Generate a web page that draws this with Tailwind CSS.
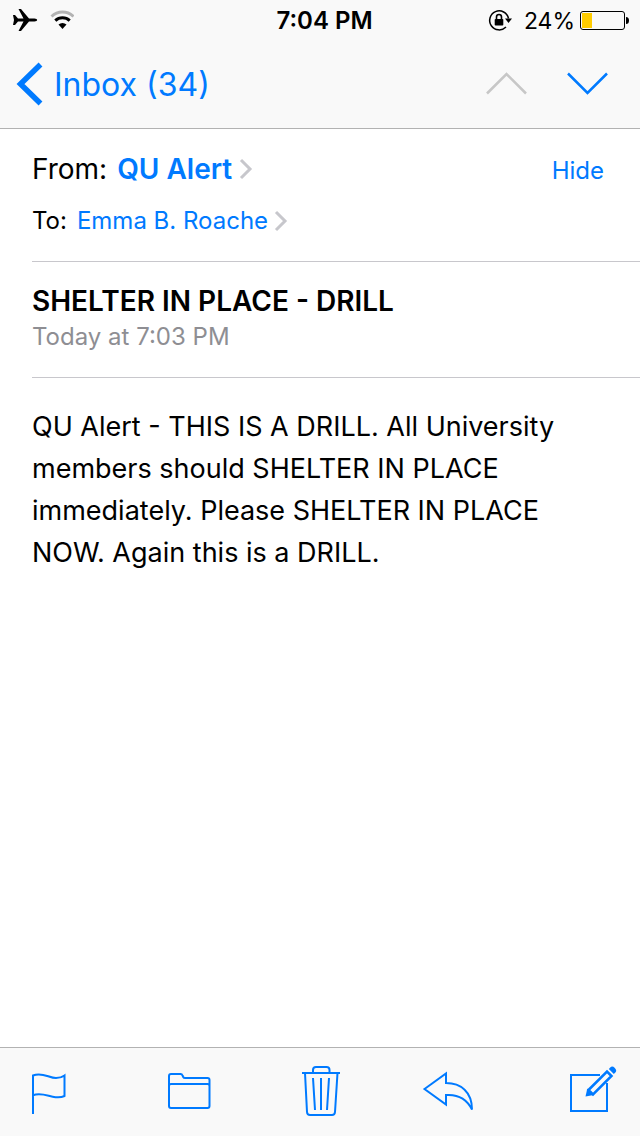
<!DOCTYPE html>
<html lang="en">
<head>
<meta charset="utf-8">
<meta name="viewport" content="width=device-width, initial-scale=1">
<title>Mail</title>
<script src="https://cdn.jsdelivr.net/npm/@tailwindcss/browser@4"></script>
</head>
<body class="flex min-h-screen flex-col bg-white font-['Inter','Liberation_Sans',sans-serif] text-black">
<header class="border-b border-[#b2b2b2] bg-[#f9f9f9]">
  <!-- Status bar -->
  <div class="grid h-10 grid-cols-[1fr_auto_1fr] items-center pt-0.5 pr-[11px] pl-5 text-2xl">
    <div class="-ml-2 flex items-center gap-3">
      <svg class="h-6 w-[26px]" viewBox="12 9 26 24" role="img" aria-label="Airplane mode"><path d="M13 15h2l3 3.400h5.500L18.500 9H21l8 9.400h5.500q2.700.2 2.700 1.600t-2.700 1.600H29L21 31h-2.500l5-9.400H18L15 25h-2l1-5z"/></svg>
      <svg class="h-6 w-6" viewBox="50 9 24 24" fill="none" role="img" aria-label="Wi-Fi"><path d="M51.500 16.500a16 16 0 0 1 22 0" stroke="#b3b3b3" stroke-width="3"/><path d="M55.300 20.700a10.500 10.500 0 0 1 14.400 0" stroke="#000" stroke-width="3"/><path d="M58.500 24.600a6 6 0 0 1 8 0l-4 4.400z" fill="#000"/></svg>
    </div>
    <div class="font-semibold">7:04 PM</div>
    <div class="flex items-center justify-end">
      <svg class="mr-3 h-6 w-[26px]" viewBox="486 9 26 24" fill="none" role="img" aria-label="Rotation lock"><path d="M508.500 18.500A9.500 9.500 0 1 0 506 27" stroke="#000" stroke-width="1.500"/><path d="M505 18.500h7l-3.500 4.500z" fill="#000"/><rect x="494.700" y="19" width="8.600" height="6.500" rx=".8" fill="#000"/><path d="M496.500 19v-2a2.500 2.500 0 0 1 5 0v2" stroke="#000" stroke-width="1.600"/></svg>
      <span class="mr-1 text-[23px]">24%</span>
      <svg class="h-6 w-[50px]" viewBox="579 9 50 24" fill="none" role="img" aria-label="Battery"><rect x="580.500" y="11.500" width="44" height="18" rx="2.500" stroke="#000"/><path fill="#ffcc00" d="M582 13h10v15h-10z"/><path d="M626 17q3 0 3 3.500t-3 3.500z" fill="#000"/></svg>
    </div>
  </div>
  <!-- Navigation bar -->
  <nav class="flex h-22 items-center pr-[31px] pl-4 text-[#007aff]">
    <a href="#" class="flex items-center gap-2.5 text-[32px] leading-10">
      <svg class="h-11 w-7" viewBox="16 62 28 44" fill="none" stroke="currentColor" stroke-width="5.500" aria-hidden="true"><path d="M40.500 64.500L20.500 84l20 19.500"/></svg>
      <span class="pt-0.5">Inbox (34)</span>
    </a>
    <div class="ml-auto flex gap-9">
      <button type="button" disabled aria-label="Previous message" class="text-[#c7c7c7]"><svg class="h-11 w-11" viewBox="485 62 44 44" fill="none" stroke="currentColor" stroke-width="2.500"><path d="M487 93.500l19.500-19.500L526 93.500"/></svg></button>
      <button type="button" aria-label="Next message"><svg class="h-11 w-11" viewBox="565 62 44 44" fill="none" stroke="currentColor" stroke-width="2.500"><path d="M568 73.500L587.500 93 607 73.500"/></svg></button>
    </div>
  </nav>
</header>
<main class="flex-1 pl-8">
  <section class="border-b border-[#c8c7cc] pt-5 pr-9 pb-5">
    <div class="flex items-center">
      <div class="flex h-10 items-center text-[28px]">From:<a href="#" class="ml-2.5 flex items-center gap-1.5 font-semibold text-[#007aff]">QU Alert
        <svg class="h-6 w-4" viewBox="0 0 16 24" fill="none" stroke="#c7c7cc" stroke-width="3" aria-hidden="true"><path d="M3 3l9 9-9 9"/></svg></a></div>
      <button type="button" class="mt-1 ml-auto text-2xl text-[#007aff]">Hide</button>
    </div>
    <div class="mt-3 flex h-10 items-center text-2xl">To:<a href="#" class="ml-2.5 flex items-center gap-1.5 text-[#007aff]">Emma B. Roache
      <svg class="h-6 w-4" viewBox="0 0 16 24" fill="none" stroke="#c7c7cc" stroke-width="3" aria-hidden="true"><path d="M2 3l9 9-9 9"/></svg></a></div>
  </section>
  <section class="border-b border-[#c8c7cc] pt-[21px] pb-[22px]">
    <h1 class="text-[28px] leading-9 font-semibold">SHELTER IN PLACE - DRILL</h1>
    <p class="text-2xl leading-9 text-[#8e8e93]">Today at 7:03 PM</p>
  </section>
  <p class="pt-7 pr-16 text-[27px] leading-[42px]">QU Alert - THIS IS A DRILL. All University members should SHELTER IN PLACE immediately. Please SHELTER IN PLACE NOW. Again this is a DRILL.</p>
</main>
<footer class="flex justify-between border-t border-[#b2b2b2] bg-[#f9f9f9] px-[22px] py-3 text-[#007aff]">
  <button type="button" aria-label="Flag"><svg class="h-16 w-16" viewBox="22 1060 64 64" fill="none" stroke="currentColor" stroke-width="2"><path d="M33 1114v-38.500c9-4 16 2.500 23 2.500 4 0 6.500-1 8.500-2.500v20.500c-3 1.500-6 1.500-9 1.200-7-.700-14-5-22.500-2"/></svg></button>
  <button type="button" aria-label="Move to folder"><svg class="h-16 w-16" viewBox="155 1060 64 64" fill="none" stroke="currentColor" stroke-width="2"><path d="M169 1106v-30q0-2 2-2h9.500q1.500 0 2 1.500l.7 1.500q.5 1 2 1H207.500q2 0 2 2v26q0 2-2 2H171q-2 0-2-2zM169 1086q0-2 2-2h36.500q2 0 2 2"/></svg></button>
  <button type="button" aria-label="Delete"><svg class="h-16 w-16" viewBox="288 1060 64 64" fill="none" stroke="currentColor" stroke-width="2"><path d="M302 1073h38M313 1073v-3q0-3 3-3h10.500q3 0 3 3v3M305 1073l2 39q.2 3 3 3h22q2.800 0 3-3l2.500-39M313 1078l2 32M321 1078v32M329 1078l-2 32"/></svg></button>
  <button type="button" aria-label="Reply"><svg class="h-16 w-16" viewBox="421 1060 64 64" fill="none" stroke="currentColor" stroke-width="2"><path d="M424.500 1089L446 1073.500v9.500c15 0 26 9 26 26.500-5-10-13-15.500-26-14.500v9.500z"/></svg></button>
  <button type="button" aria-label="Compose"><svg class="h-16 w-16" viewBox="554 1060 64 64" fill="none" stroke="currentColor" stroke-width="2"><path d="M600 1075h-29v36h36v-28"/><path d="M588.500 1090L607 1071.500l4.500 4.500L593 1094.500z" stroke-width="2.500"/><path d="M585.500 1096.500l1.800-8 6.500 6.500z" fill="currentColor" stroke="none"/><path d="M608.800 1069l1.500-1.500q2-2 4.500.5t.5 4.500l-1.500 1.500z" fill="currentColor" stroke="none"/></svg></button>
</footer>
</body>
</html>
